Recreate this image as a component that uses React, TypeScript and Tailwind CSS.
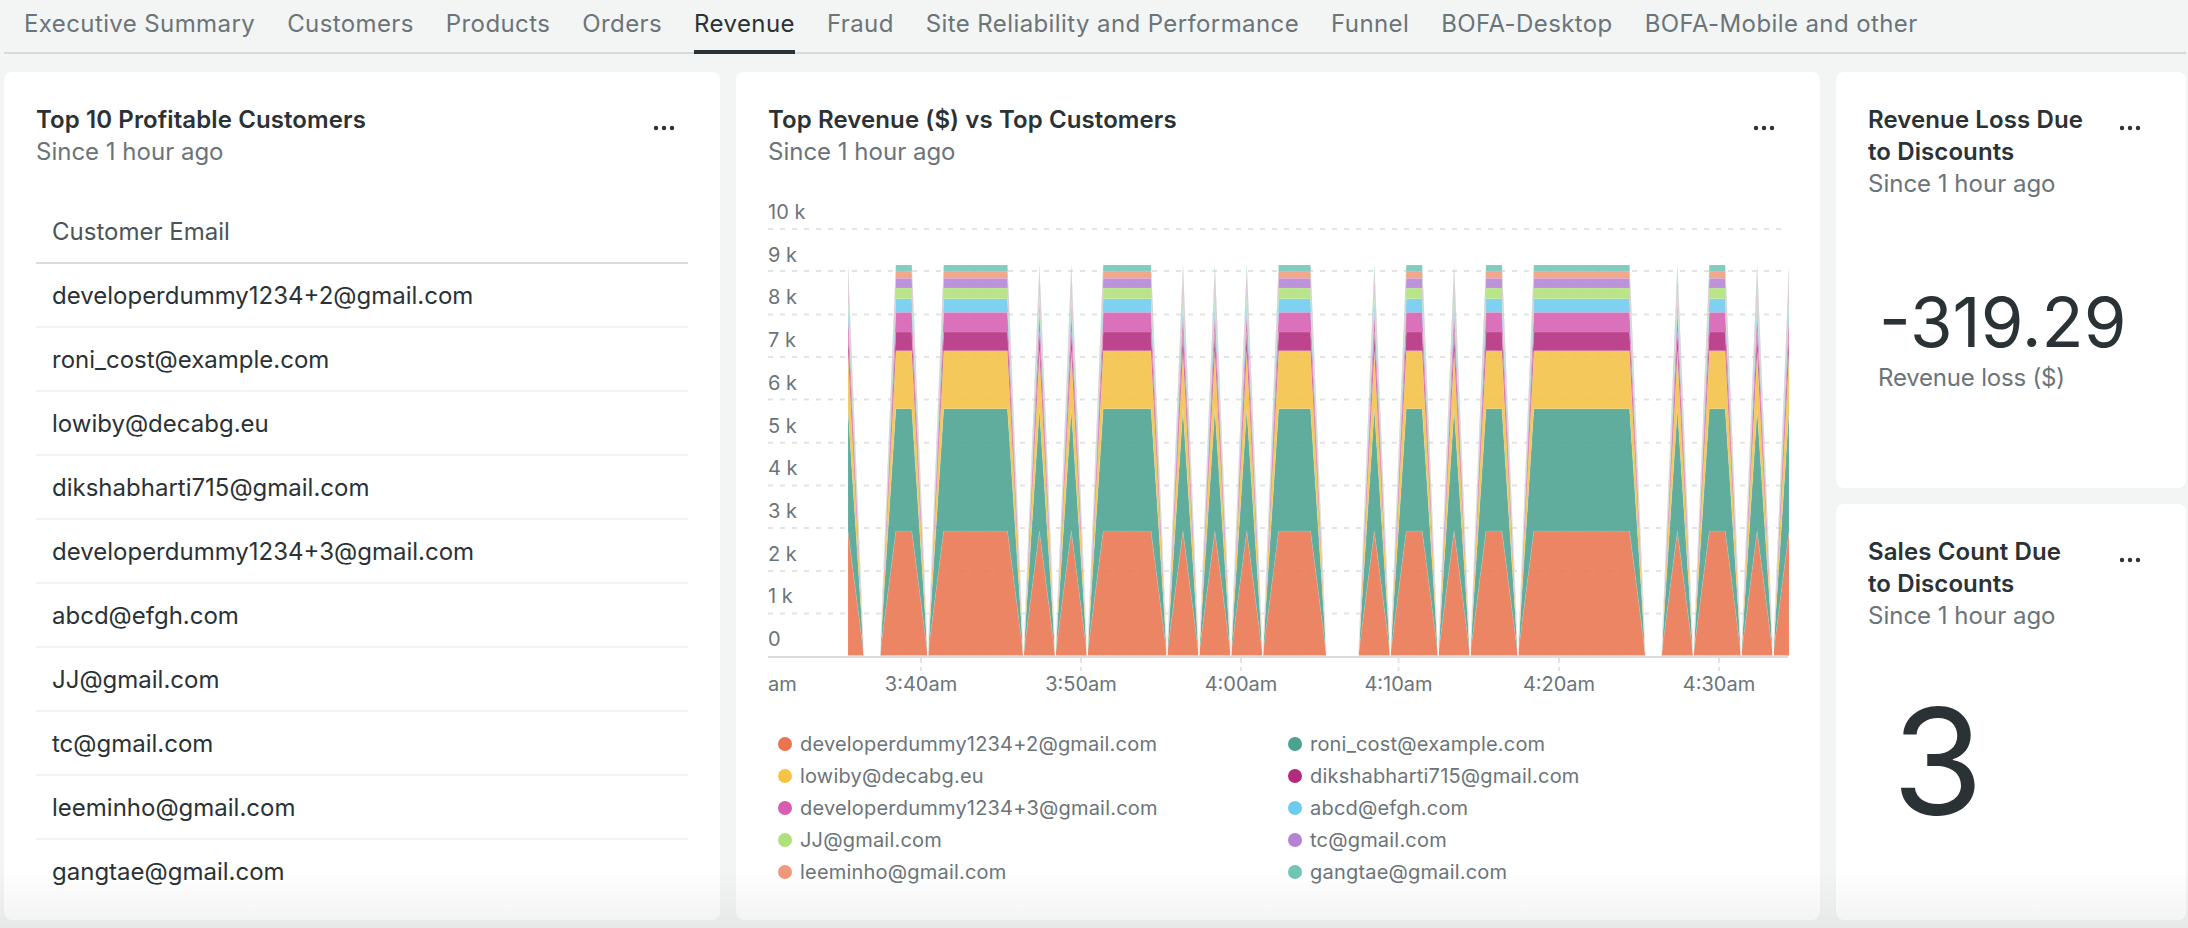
import React from "react";

const tabs = ["Executive Summary","Customers","Products","Orders","Revenue","Fraud","Site Reliability and Performance","Funnel","BOFA-Desktop","BOFA-Mobile and other"];
const emails = ["developerdummy1234+2@gmail.com","roni_cost@example.com","lowiby@decabg.eu","dikshabharti715@gmail.com","developerdummy1234+3@gmail.com","abcd@efgh.com","JJ@gmail.com","tc@gmail.com","leeminho@gmail.com","gangtae@gmail.com"];
const dots = ["#e9744e","#4aa28f","#f6c344","#b32b7d","#d65db1","#6ccbee","#afe07a","#b582d6","#f09a7c","#72c5b4"];
const fills = ["#e9744e","#4aa28f","#f2c043","#b32b7d","#d65db1","#6ccbee","#afe07a","#b582d6","#f09a7c","#72c5b4"];
// stacked tops, in page pixels relative to the chart's own origin (y=200)
const baseY = 455.5;
const tops = [331, 208.7, 150.7, 132, 112.3, 98.7, 88, 78.3, 71, 65];

const onIdx = new Set<number>([0,3,4,6,7,8,9,10,12,14,16,17,18,19,21,23,25,27,28,29,33,35,36,38,40,41,43,44,45,46,47,48,49,52,54,55,57,59]);
const N = 60;
const X0 = 80;
const STEP = 15.95;
const px = (i: number) => X0 + STEP * i;

function bands() {
  return tops.map((top, k) => {
    const lower = k === 0 ? baseY : tops[k - 1];
    const up: string[] = [];
    const down: string[] = [];
    for (let i = 0; i < N; i++) {
      const on = onIdx.has(i);
      up.push(`${px(i).toFixed(2)},${(on ? top : baseY).toFixed(2)}`);
      down.unshift(`${px(i).toFixed(2)},${(on ? lower : baseY).toFixed(2)}`);
    }
    return up.concat(down).join(" ");
  });
}

const yLabels = ["10 k","9 k","8 k","7 k","6 k","5 k","4 k","3 k","2 k","1 k","0"];
const gridY = [29, 71, 114.5, 157, 199.5, 242.7, 285.5, 328, 371, 413.5];
const xTicks: [string, number][] = [["3:40am",153],["3:50am",313],["4:00am",473],["4:10am",630.5],["4:20am",791],["4:30am",951]];

function Chart() {
  const polys = bands();
  return (
    <svg width={1022} height={500} viewBox="0 0 1022 500" className="block">
      {gridY.map((y) => (
        <line key={y} x1={0} x2={1020} y1={y} y2={y} stroke="#e2e3e3" strokeWidth={2} strokeDasharray="5 7" />
      ))}
      {yLabels.map((l, i) => (
        <text key={l} x={0} y={19 + i * 42.7} fill="#6b7479" fontSize={20} fontFamily="Inter, sans-serif">{l}</text>
      ))}
      <g>
        {polys.map((p, k) => (
          <polygon key={k} points={p} fill={fills[k]} fillOpacity={0.88} stroke="#ffffff" strokeOpacity={0.2} strokeWidth={0.5} />
        ))}
      </g>
      <line x1={0} x2={1020} y1={457} y2={457} stroke="#dcdcdc" strokeWidth={2} />
      {xTicks.map(([l, x]) => (
        <g key={l}>
          <line x1={x} x2={x} y1={458} y2={471} stroke="#e2e3e3" strokeWidth={2} strokeDasharray="5 4" />
          <text x={x} y={491} textAnchor="middle" fill="#6b7479" fontSize={20} fontFamily="Inter, sans-serif">{l}</text>
        </g>
      ))}
      <text x={0} y={491} fill="#6b7479" fontSize={20} fontFamily="Inter, sans-serif">am</text>
    </svg>
  );
}

function Dots() {
  return (
    <svg width={24} height={8} viewBox="0 0 24 8" className="block shrink-0 mt-[20px]">
      <circle cx={4} cy={4} r={2.2} fill="#2a3236" />
      <circle cx={12} cy={4} r={2.2} fill="#2a3236" />
      <circle cx={20} cy={4} r={2.2} fill="#2a3236" />
    </svg>
  );
}

function Header({ title }: { title: React.ReactNode }) {
  return (
    <div className="flex justify-between items-start">
      <div>
        <div className="text-[24px] leading-[32px] font-semibold tracking-[0.1px] text-[#2a3236]">{title}</div>
        <div className="text-[24px] leading-[32px] text-[#6b7479]">Since 1 hour ago</div>
      </div>
      <div className="mr-[12px]"><Dots /></div>
    </div>
  );
}

export default function App() {
  return (
    <div className="relative h-[928px] w-[2188px] overflow-hidden bg-[#f3f5f5] font-[Inter] pl-[4px] pr-[2px]">
      <div className="flex h-[54px] gap-[32px] border-b-2 border-[#d5d9d9] pl-[20px]">
        {tabs.map((t) => (
          <div
            key={t}
            className={
              t === "Revenue"
                ? "h-[54px] pt-[8px] text-[24px] leading-[32px] tracking-[0.4px] text-[#2a3236] border-b-4 border-[#2a3236]"
                : "h-[54px] pt-[8px] text-[24px] leading-[32px] tracking-[0.4px] text-[#6b7479]"
            }
          >
            {t}
          </div>
        ))}
      </div>
      <div className="flex gap-[16px] mt-[18px] h-[848px]">
        <div className="w-[716px] bg-white rounded-lg p-[32px]">
          <Header title="Top 10 Profitable Customers" />
          <div className="mt-[32px] h-[64px] pt-[2px] border-b-2 border-[#dcdcdc] px-[16px] flex items-center text-[24px] text-[#4b5459]">Customer Email</div>
          {emails.map((e, i) => (
            <div key={e} className={i < 9 ? "h-[64px] pt-[2px] border-b-2 border-[#f3f3f3] px-[16px] flex items-center text-[24px] text-[#2a3236]" : "h-[64px] px-[16px] flex items-center text-[24px] text-[#2a3236]"}>{e}</div>
          ))}
        </div>
        <div className="w-[1084px] bg-white rounded-lg p-[32px]">
          <Header title="Top Revenue ($) vs Top Customers" />
          <div className="mt-[32px]"><Chart /></div>
          <div className="mt-[28px] grid grid-cols-[510px_1fr] pl-[10px]">
            {emails.map((e, i) => (
              <div key={e} className="h-[32px] flex items-center gap-[8px] text-[20px] tracking-[0.2px] text-[#6b7479]">
                <span className="w-[14px] h-[14px] rounded-full shrink-0" style={{ backgroundColor: dots[i] }} />
                {e}
              </div>
            ))}
          </div>
        </div>
        <div className="flex-1 flex flex-col gap-[16px]">
          <div className="h-[416px] bg-white rounded-lg p-[32px]">
            <Header title={<>Revenue Loss Due<br />to Discounts</>} />
            <div className="mt-[80px] ml-[11px] text-[69px] leading-[84px] text-[#2a3236]">-319.29</div>
            <div className="ml-[10px] text-[24px] leading-[28px] tracking-[-0.2px] text-[#6b7479]">Revenue loss ($)</div>
          </div>
          <div className="h-[416px] bg-white rounded-lg p-[32px]">
            <Header title={<>Sales Count Due<br />to Discounts</>} />
            <div className="mt-[40px] ml-[24px] text-[148px] leading-[180px] text-[#2a3236]">3</div>
          </div>
        </div>
      </div>
      <div className="absolute left-0 right-0 bottom-0 h-[60px] bg-linear-to-b from-transparent to-[rgba(0,0,0,0.05)] pointer-events-none" />
    </div>
  );
}
